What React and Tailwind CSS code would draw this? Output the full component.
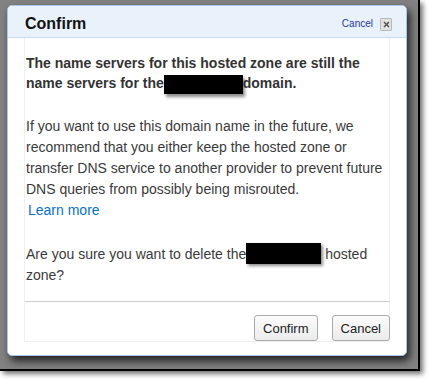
export default function App() {
  return (
    <div className="w-[428px] h-[379px] bg-white font-['Liberation_Sans',Arial,sans-serif]">
      <div className="w-[420px] h-[371px] bg-[#828282] border-r-2 border-b-2 border-black shadow-[3px_3px_5px_rgba(0,0,0,0.55)] pt-[5px] pl-[7px]">
        <div className="w-[400px] h-[351px] bg-white border border-[#a9c6e6] rounded-[5px] shadow-[3px_5px_9px_rgba(0,0,0,0.75)] flex flex-col overflow-hidden">
          <div className="h-[32px] shrink-0 bg-[#e9f1fb] border-b border-[#c6daf0] flex items-center pt-[5px] pl-[17px] pr-[14px]">
            <span className="text-[16px] font-bold text-[#111] leading-none">Confirm</span>
            <div className="ml-auto flex items-center">
              <span className="text-[10px] text-[#1f3a93] leading-none">Cancel</span>
              <span className="ml-[7px] w-[12px] h-[13px] border border-[#b9b9b9] bg-[#e2e2e2] rounded-[1px] flex items-center justify-center">
                <svg width="7" height="7" viewBox="0 0 7 7">
                  <path d="M1 1 L6 6 M6 1 L1 6" stroke="#555" strokeWidth="1.6" />
                </svg>
              </span>
            </div>
          </div>
          <div className="flex-1 flex flex-col px-[16px] pb-[14px]">
            <div className="flex-1 flex flex-col border-x border-b border-[#efefef]">
              <div className="pl-[1px] pt-[15px] text-[14px] leading-[21px] text-[#3a3a3a]">
                <p className="font-bold text-[#333] leading-[20px]">
                  The name servers for this hosted zone are still the name servers for the
                  <span className="inline-block w-[79px] h-[19px] bg-black align-[-6px] shadow-[2px_3px_3px_rgba(0,0,0,0.45)]" />
                  domain.
                </p>
                <p className="mt-[22px]">
                  If you want to use this domain name in the future, we recommend that you either keep the hosted zone or transfer DNS service to another provider to prevent future DNS queries from possibly being misrouted.
                </p>
                <p className="ml-[2px] text-[#0a6fca]">Learn more</p>
                <p className="mt-[22px] mb-[15px]">
                  Are you sure you want to delete the
                  <span className="inline-block w-[75px] h-[21px] bg-black align-[-5px] shadow-[2px_2px_3px_rgba(0,0,0,0.45)]" />
                  {" "}hosted zone?
                </p>
              </div>
              <div className="mt-auto border-t border-[#cdcdcd] pt-[13px] flex justify-end gap-[14px] -mr-[1px]">
                <button className="h-[26px] px-[8px] border border-[#a9a9a9] rounded-[3px] bg-gradient-to-b from-[#fbfbfb] to-[#ececec] text-[13px] text-[#222] leading-none">
                  Confirm
                </button>
                <button className="h-[26px] px-[8px] border border-[#a9a9a9] rounded-[3px] bg-gradient-to-b from-[#fbfbfb] to-[#ececec] text-[13px] text-[#222] leading-none">
                  Cancel
                </button>
              </div>
            </div>
          </div>
        </div>
      </div>
    </div>
  );
}
